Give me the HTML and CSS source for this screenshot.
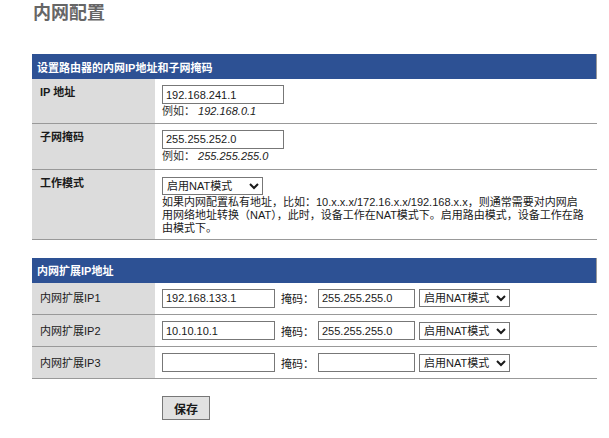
FILE: index.html
```html
<!DOCTYPE html>
<html lang="zh-CN">
<head>
<meta charset="utf-8">
<title>内网配置</title>
<link rel="stylesheet" href="styles.css">
</head>
<body>
<div class="page">
  <h1 class="title">内网配置</h1>

  <table class="cfg">
    <colgroup><col class="c1"><col class="c2"></colgroup>
    <tr class="head"><th colspan="2">设置路由器的内网IP地址和子网掩码</th></tr>
    <tr class="r1">
      <td class="lbl bold">IP 地址</td>
      <td class="val">
        <input class="ip" type="text" value="192.168.241.1">
        <div class="eg">例如： <i>192.168.0.1</i></div>
      </td>
    </tr>
    <tr class="r2">
      <td class="lbl bold">子网掩码</td>
      <td class="val">
        <input class="ip" type="text" value="255.255.252.0">
        <div class="eg">例如： <i>255.255.255.0</i></div>
      </td>
    </tr>
    <tr class="r3">
      <td class="lbl bold">工作模式</td>
      <td class="val">
        <select class="mode"><option>启用NAT模式</option><option>启用路由模式</option></select>
        <div class="desc">如果内网配置私有地址，比如：10.x.x.x/172.16.x.x/192.168.x.x，则通常需要对内网启用网络地址转换（NAT），此时，设备工作在NAT模式下。启用路由模式，设备工作在路由模式下。</div>
      </td>
    </tr>
  </table>

  <table class="cfg ext">
    <colgroup><col class="c1"><col class="c2"></colgroup>
    <tr class="head"><th colspan="2">内网扩展IP地址</th></tr>
    <tr class="er">
      <td class="lbl">内网扩展IP1</td>
      <td class="val">
        <div class="line">
          <input class="eip" type="text" value="192.168.133.1">
          <span class="mk">掩码：</span>
          <input class="emk" type="text" value="255.255.255.0">
          <select class="emode"><option>启用NAT模式</option><option>启用路由模式</option></select>
        </div>
      </td>
    </tr>
    <tr class="er">
      <td class="lbl">内网扩展IP2</td>
      <td class="val">
        <div class="line">
          <input class="eip" type="text" value="10.10.10.1">
          <span class="mk">掩码：</span>
          <input class="emk" type="text" value="255.255.255.0">
          <select class="emode"><option>启用NAT模式</option><option>启用路由模式</option></select>
        </div>
      </td>
    </tr>
    <tr class="er">
      <td class="lbl">内网扩展IP3</td>
      <td class="val">
        <div class="line">
          <input class="eip" type="text" value="">
          <span class="mk">掩码：</span>
          <input class="emk" type="text" value="">
          <select class="emode"><option>启用NAT模式</option><option>启用路由模式</option></select>
        </div>
      </td>
    </tr>
  </table>

  <div class="actions">
    <button class="save" type="button">保存</button>
  </div>
</div>
</body>
</html>
```
FILE: styles.css
```css
html, body {
  margin: 0;
  padding: 0;
  background: #fff;
}
body {
  font-family: "Liberation Sans", "Noto Sans CJK SC", sans-serif;
  font-size: 11px;
  color: #1a1a1a;
}
.page {
  padding: 0 12px 0 32px;
}
.title {
  margin: 0;
  padding: 1px 0 0 1px;
  height: 54px;
  box-sizing: border-box;
  font-size: 18px;
  line-height: 24px;
  font-weight: bold;
  color: #666;
}
.cfg {
  width: 565px;
  border-collapse: collapse;
  table-layout: fixed;
}
.c1 { width: 123px; }
.cfg td, .cfg th {
  padding: 0;
  vertical-align: top;
  text-align: left;
  box-sizing: border-box;
}
.head th {
  background: #2d5194;
  color: #fff;
  font-size: 11px;
  font-weight: bold;
  height: 25px;
  padding: 0 0 0 5px;
  vertical-align: middle;
  border-right: 1px solid #999;
}
.cfg tr.r1 td, .cfg tr.r2 td, .cfg tr.r3 td, .cfg tr.er td {
  border-bottom: 1px solid #999;
}
.lbl {
  background: #dcdcdc;
  padding: 5px 0 0 8px !important;
  font-size: 11px;
  line-height: 16px;
}
.lbl.bold {
  font-weight: bold;
}
.val {
  padding: 6px 10px 0 7px !important;
}
.r1 td { height: 44px; }
.r2 td { height: 46px; }
.r3 td { height: 70px; }
.r3 .val { padding-top: 7px !important; }
input {
  font-family: "Liberation Sans", "Noto Sans CJK SC", sans-serif;
  font-size: 11px;
  color: #1a1a1a;
  border: 1px solid #777;
  height: 19px;
  box-sizing: border-box;
  padding: 0 3px;
  margin: 0;
  background: #fff;
  display: block;
}
.ip {
  width: 122px;
}
.eg {
  margin-top: 0;
  line-height: 14px;
  color: #333;
}
.eg i {
  color: #1a1a1a;
}
select {
  font-family: "Liberation Sans", "Noto Sans CJK SC", sans-serif;
  font-size: 11px;
  color: #1a1a1a;
  border: 1px solid #777;
  border-radius: 0;
  height: 18px;
  margin: 0;
  padding: 0;
  background: #fff;
  box-sizing: border-box;
}
.mode {
  display: block;
  width: 101px;
}
.desc {
  margin-top: 1px;
  line-height: 13px;
}
.ext {
  margin-top: 18px;
}
.er td {
  height: 32px;
}
.er .lbl {
  padding-top: 0 !important;
  vertical-align: middle;
}
.er .val {
  padding: 0 7px !important;
  vertical-align: middle;
}
.line {
  display: flex;
  align-items: center;
}
.eip {
  width: 113px;
}
.mk {
  margin: 0 4px 0 6px;
  white-space: nowrap;
}
.emk {
  width: 97px;
}
.emode {
  width: 91px;
  margin-left: 4px;
}
.actions {
  padding: 17px 0 0 130px;
}
.save {
  font-family: "Liberation Sans", "Noto Sans CJK SC", sans-serif;
  font-size: 12px;
  font-weight: bold;
  color: #1a1a1a;
  width: 48px;
  height: 24px;
  background: #e1e1e1;
  border: 1px solid #777;
  border-radius: 0;
  padding: 0;
}
```
